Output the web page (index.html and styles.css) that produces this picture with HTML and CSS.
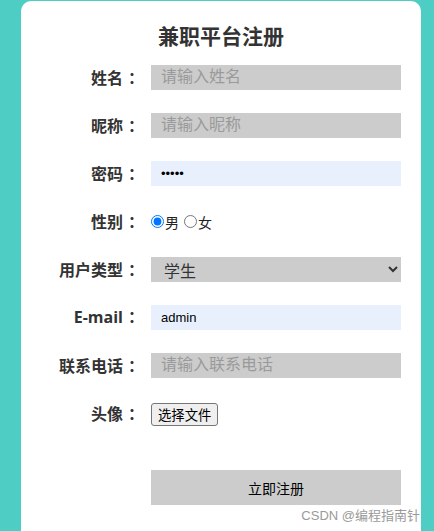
FILE: index.html
```html
<!DOCTYPE html>
<html lang="zh-CN">
<head>
    <meta charset="UTF-8">
    <meta name="viewport" content="width=device-width, initial-scale=1.0">
    <title>兼职平台注册</title>
    <link rel="stylesheet" href="styles.css">
</head>
<body>
    <div class="card">
        <h2 class="title">兼职平台注册</h2>
        <form class="regform">
            <label class="lbl">姓名<span class="colon">：</span></label>
            <input type="text" class="ipt" placeholder="请输入姓名">

            <label class="lbl">昵称<span class="colon">：</span></label>
            <input type="text" class="ipt" placeholder="请输入昵称">

            <label class="lbl">密码<span class="colon">：</span></label>
            <input type="password" class="ipt filled" value="12345">

            <label class="lbl">性别<span class="colon">：</span></label>
            <div class="radios">
                <input type="radio" name="sex" checked><span>男</span>
                <input type="radio" name="sex"><span>女</span>
            </div>

            <label class="lbl">用户类型<span class="colon">：</span></label>
            <select class="sel">
                <option>学生</option>
                <option>商家</option>
            </select>

            <label class="lbl en">E-mail<span class="colon">：</span></label>
            <input type="text" class="ipt filled" value="admin">

            <label class="lbl">联系电话<span class="colon">：</span></label>
            <input type="text" class="ipt" placeholder="请输入联系电话">

            <label class="lbl">头像<span class="colon">：</span></label>
            <div><button type="button" class="filebtn">选择文件</button></div>

            <div></div>
            <button type="button" class="submit">立即注册</button>
        </form>
    </div>
    <div class="mark">CSDN @编程指南针</div>
</body>
</html>
```

FILE: styles.css
```css
*{
    box-sizing: border-box;
}
body{
    margin: 0;
    height: 531px;
    overflow: hidden;
    background-color: #4ecdc4;
    font-family: "Noto Sans CJK SC", "Liberation Sans", sans-serif;
    color: #333;
}
.card{
    position: relative;
    width: 400px;
    height: 530px;
    margin: 1px 0 0 21px;
    background-color: #fff;
    border-radius: 10px 10px 0 0;
    padding-top: 19px;
}
.title{
    margin: 0 0 15px 0;
    text-align: center;
    font-size: 21px;
    line-height: 30px;
    font-weight: bold;
    color: #333;
}
.regform{
    display: grid;
    grid-template-columns: 120px 250px;
    column-gap: 10px;
    row-gap: 23px;
    align-items: center;
}
.lbl{
    text-align: right;
    font-size: 16px;
    font-weight: bold;
    line-height: 25px;
    color: #333;
}
.lbl .colon{
    margin: 0 -3px 0 5px;
}
.lbl.en{
    font-family: "Open Sans", "Noto Sans CJK SC", sans-serif;
}
.ipt{
    height: 25px;
    width: 250px;
    border: none;
    outline: none;
    background-color: #ccc;
    padding: 0 0 0 10px;
    font-size: 13px;
    font-family: "Liberation Sans", "Noto Sans CJK SC", sans-serif;
    color: #000;
}
.ipt::placeholder{
    font-size: 16px;
    color: #9a9a9a;
    font-family: "Noto Sans CJK SC", sans-serif;
}
.ipt.filled{
    background-color: #e8f0fe;
}
.radios{
    display: flex;
    align-items: center;
    height: 25px;
    font-size: 14px;
    color: #222;
}
.radios input{
    margin: 0 1px 0 0;
    width: 13px;
    height: 13px;
}
.radios span{
    margin-right: 5px;
}
.sel{
    height: 25px;
    width: 250px;
    border: none;
    outline: none;
    background-color: #ccc;
    padding-left: 9px;
    font-size: 16px;
    color: #333;
    font-family: "Noto Sans CJK SC", sans-serif;
}
.filebtn{
    height: 23px;
    padding: 0 6px;
    font-size: 13.33px;
    font-family: "Noto Sans CJK SC", sans-serif;
    background-color: #efefef;
    border: 1px solid #767676;
    border-radius: 3px;
    color: #000;
}
.submit{
    margin-top: 21px;
    height: 35px;
    width: 250px;
    border: none;
    background-color: #ccc;
    font-size: 14px;
    font-family: "Noto Sans CJK SC", sans-serif;
    color: #000;
}
.mark{
    position: absolute;
    right: 14px;
    top: 505px;
    font-size: 13px;
    color: #9a9a9a;
    font-family: "Liberation Sans", "Noto Sans CJK SC", sans-serif;
}
```
